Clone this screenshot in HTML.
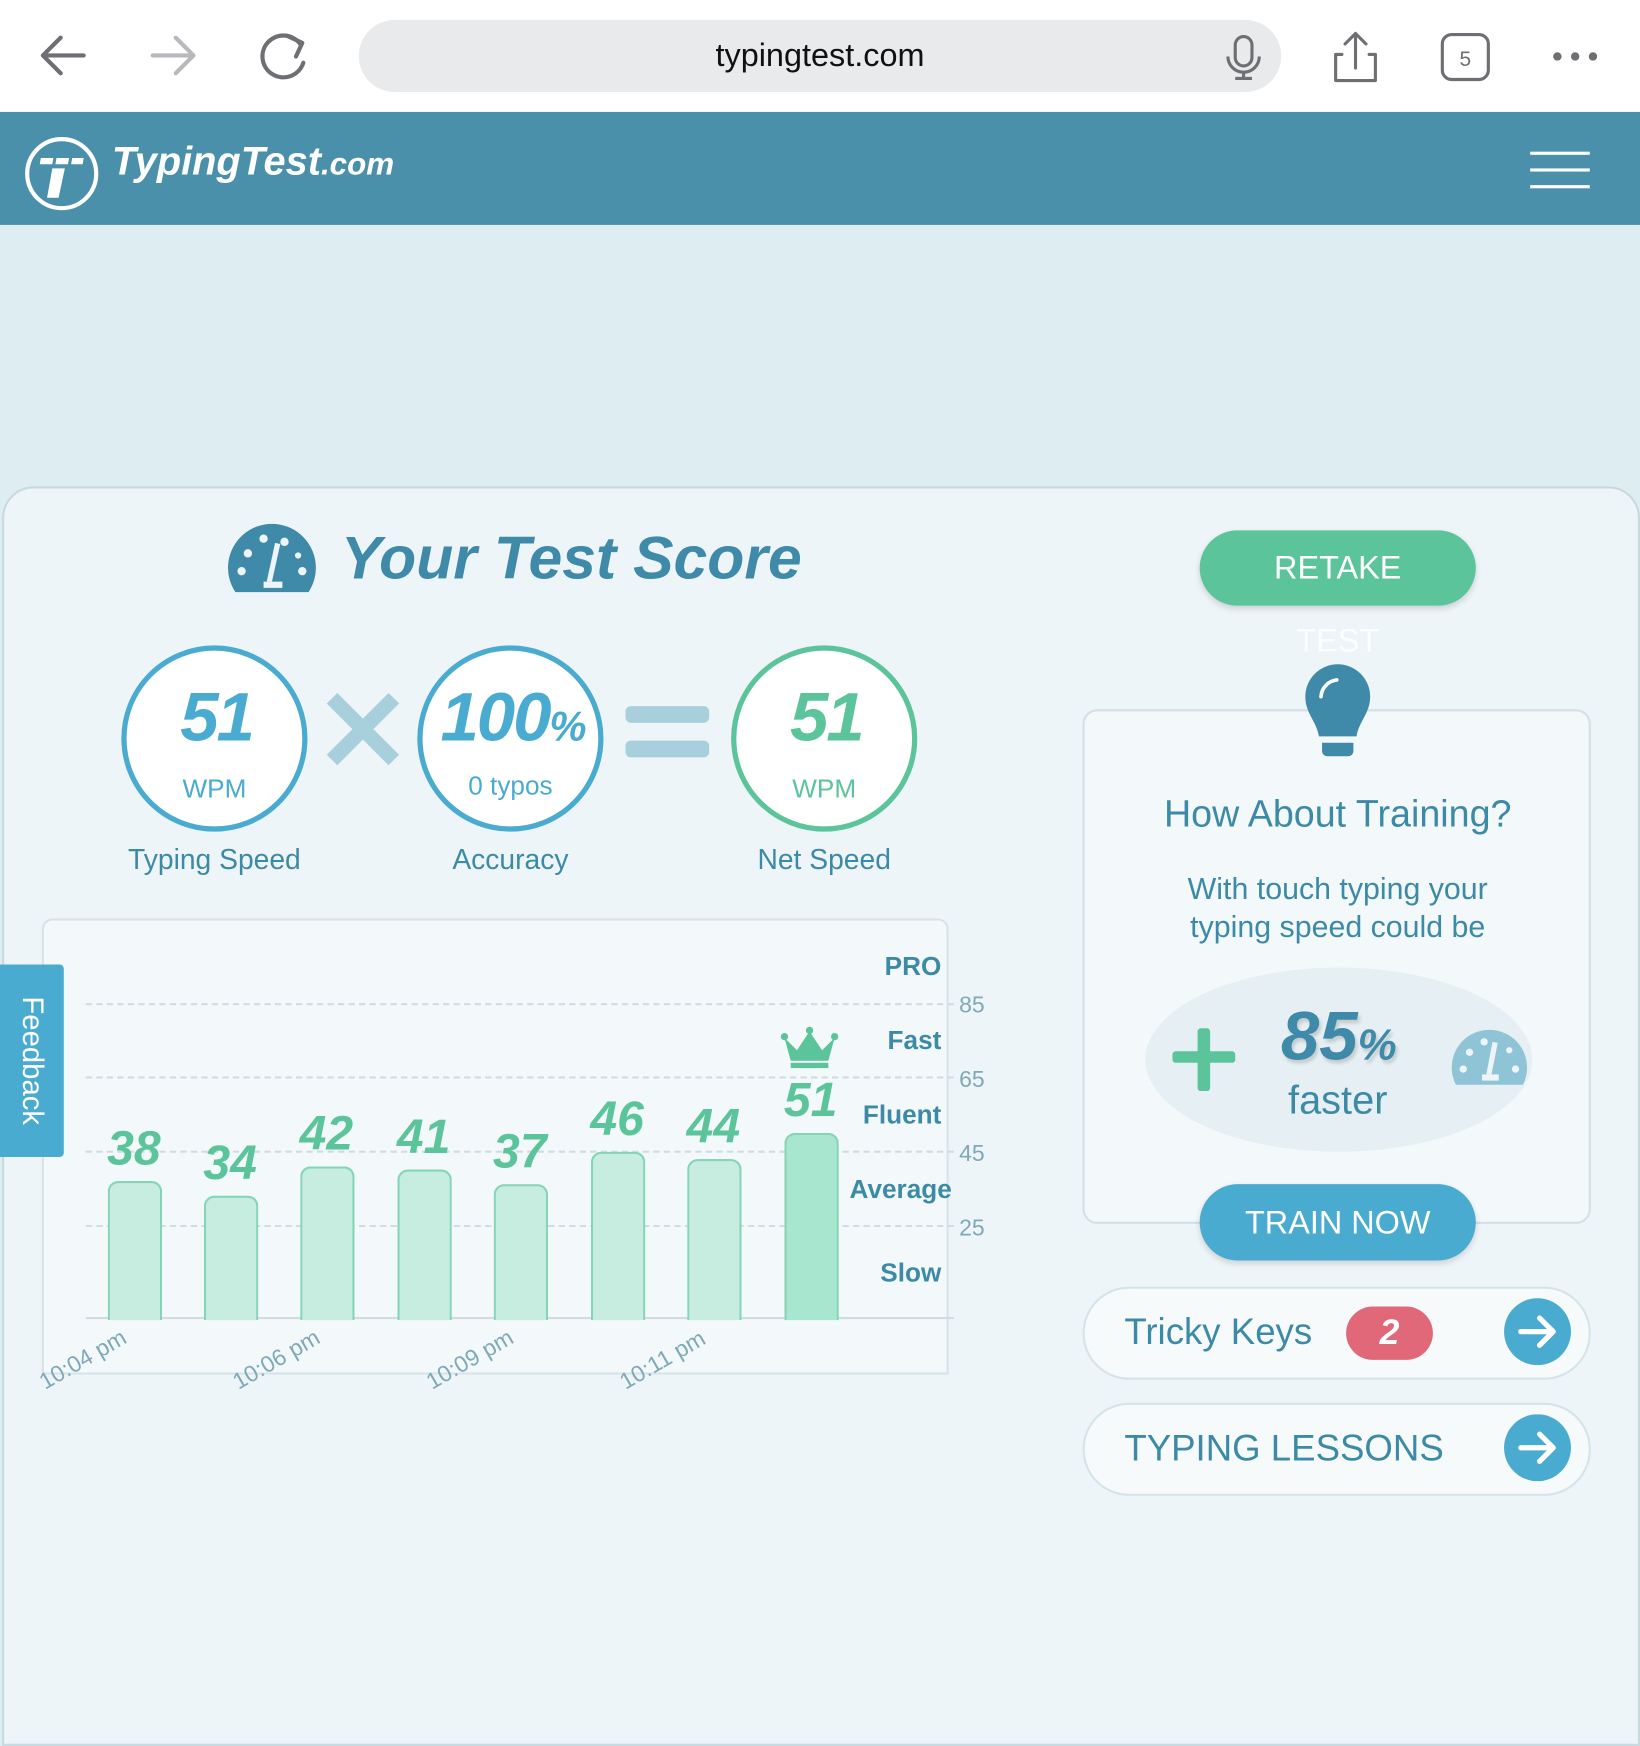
<!DOCTYPE html>
<html><head><meta charset="utf-8"><style>
html,body{margin:0;padding:0;width:1640px;height:1544px;overflow:hidden;background:#deedf2;font-family:"Liberation Sans",sans-serif}
#w{position:absolute;left:0;top:0;width:1568px;height:1476px;transform:scale(1.04592,1.04607);transform-origin:0 0}
.a{position:absolute}
.c{position:absolute;transform:translate(-50%,-50%);white-space:nowrap}
.circ{position:absolute;width:178px;height:178px;border-radius:50%;background:#fff;box-sizing:border-box}
.big{font-weight:bold;font-style:italic;font-size:66px;letter-spacing:-2px}
.lab{color:#3c8aa6;font-size:27px}
.btn{position:absolute;border-radius:37px;color:#fff;font-size:31px;text-align:center;box-shadow:0 3px 6px rgba(0,0,0,.15)}
.num{position:absolute;transform:translateX(-50%);color:#5bc49a;font-weight:bold;font-style:italic;font-size:46px}
.bar{position:absolute;width:48px;background:#c6ede0;border:2px solid #84d4b6;border-bottom:none;border-radius:10px 10px 0 0}
.rl{position:absolute;right:668px;color:#3c8aa6;font-weight:bold;font-size:25px}
.yl{position:absolute;left:917px;color:#7fa9b8;font-size:22px}
.dl{position:absolute;left:82px;width:830px;border-top:2px dashed #cfdde3}
.tl{position:absolute;color:#7fa9b8;font-size:22px;transform:rotate(-30deg);transform-origin:left bottom}
.pill{position:absolute;left:1035px;width:486px;border:2px solid #d6e3e8;border-radius:46px;background:#f7fafb;box-sizing:border-box}
</style></head><body><div id="w">
<div class="a" style="left:0;top:0;width:1568px;height:107px;background:#fff"></div>
<svg class="a" style="left:30px;top:28px" width="1520" height="60" viewBox="30 28 1520 60">
<g fill="none" stroke="#6e6e73" stroke-width="4" stroke-linecap="round" stroke-linejoin="round">
<path d="M80 53H42M58 36L41 53L58 70"/>
<path d="M146 53H184M168 36L185 53L168 70" stroke="#b8b8bd"/>
<path d="M287 42A20 20 0 1 0 290 60"/><path d="M276 35L289 41L283 54"/>
<path d="M1283 52h-6v25h38v-25h-6M1296 33v32M1286 42l10-10l10 10" stroke-width="3"/>
<rect x="1379" y="33" width="44" height="43" rx="9" stroke-width="3"/>
</g>
<text x="1401" y="63" font-size="20" fill="#6e6e73" text-anchor="middle" font-family="Liberation Sans">5</text>
<circle cx="1489" cy="54" r="4" fill="#6e6e73"/><circle cx="1506" cy="54" r="4" fill="#6e6e73"/><circle cx="1523" cy="54" r="4" fill="#6e6e73"/>
</svg>
<div class="a" style="left:343px;top:19px;width:882px;height:69px;border-radius:35px;background:#e9eaec"></div>
<div class="c" style="left:784px;top:53px;font-size:31px;color:#111">typingtest.com</div>
<svg class="a" style="left:1170px;top:32px" width="40" height="46"><g fill="none" stroke="#6e6e73" stroke-width="3"><rect x="11" y="3" width="16" height="28" rx="8"/><path d="M4 22a15 15 0 0 0 30 0M19 37v6M11 43h16"/></g></svg>
<div class="a" style="left:0;top:107px;width:1568px;height:108px;background:#4a90aa"></div>
<svg class="a" style="left:22px;top:129px" width="74" height="74"><circle cx="37" cy="37" r="33" fill="none" stroke="#fff" stroke-width="4"/><path d="M17 22h12l-1 6h-12zM32 22h12l-1 6h-12zM47 22h11l-1 6h-11zM28 32h12l-6 28h-11z" fill="#fff"/></svg>
<div class="a" style="left:107px;top:134px;color:#fff;font-weight:bold;font-style:italic;font-size:38px">TypingTest<span style="font-size:30px">.com</span></div>
<div class="a" style="left:1463px;top:145px;width:57px;height:3px;background:#fff"></div>
<div class="a" style="left:1463px;top:161px;width:57px;height:3px;background:#fff"></div>
<div class="a" style="left:1463px;top:177px;width:57px;height:3px;background:#fff"></div>
<div class="a" style="left:2px;top:465px;width:1562px;height:1200px;background:#eef5f8;border:2px solid #c9d9e0;border-radius:30px 30px 0 0"></div>
<svg class="a" style="left:217px;top:499px" width="86" height="68" viewBox="0 0 86 68"><path d="M8 67A42 42 0 1 1 78 67Z" fill="#3f8aa8"/><g fill="#eef5f8"><circle cx="14" cy="47" r="4"/><circle cx="20" cy="30" r="4"/><circle cx="35" cy="16" r="4"/><circle cx="55" cy="19" r="4"/><circle cx="72" cy="47" r="4"/><circle cx="68" cy="32" r="3"/><path d="M46 20l5 1l-8 36h-5z"/><path d="M35 57h18v6h-18z"/></g></svg>
<div class="a" style="left:326px;top:500px;color:#3f8aa8;font-weight:bold;font-style:italic;font-size:58px">Your Test Score</div>
<div class="circ" style="left:116px;top:617px;border:5px solid #4aabd0"></div>
<div class="c big" style="left:207px;top:685px;color:#4aabd0">51</div>
<div class="c" style="left:205px;top:755px;color:#4aabd0;font-size:25px">WPM</div>
<div class="c lab" style="left:205px;top:822px">Typing Speed</div>
<div class="c" style="left:347px;top:700px;color:#a8cfdc;font-size:110px;font-weight:bold;line-height:1">✕</div>
<div class="circ" style="left:399px;top:617px;border:5px solid #4aabd0"></div>
<div class="c big" style="left:490px;top:685px;color:#4aabd0">100<span style="font-size:40px">%</span></div>
<div class="c" style="left:488px;top:752px;color:#4aabd0;font-size:25px">0 typos</div>
<div class="c lab" style="left:488px;top:822px">Accuracy</div>
<div class="a" style="left:598px;top:675px;width:80px;height:16px;border-radius:5px;background:#a8cfdc"></div>
<div class="a" style="left:598px;top:708px;width:80px;height:16px;border-radius:5px;background:#a8cfdc"></div>
<div class="circ" style="left:699px;top:617px;border:5px solid #5bc49a"></div>
<div class="c big" style="left:790px;top:685px;color:#5bc49a">51</div>
<div class="c" style="left:788px;top:755px;color:#5bc49a;font-size:25px">WPM</div>
<div class="c lab" style="left:788px;top:822px">Net Speed</div>
<div class="a" style="left:40px;top:878px;width:863px;height:432px;background:#f3f8fa;border:2px solid #d6e3e8;border-radius:10px 10px 0 0"></div>
<div class="dl" style="top:959px"></div><div class="dl" style="top:1029px"></div><div class="dl" style="top:1100px"></div><div class="dl" style="top:1171px"></div>
<div class="a" style="left:82px;top:1259px;width:830px;border-top:2px solid #cfdde3"></div>
<div class="yl" style="top:948px">85</div><div class="yl" style="top:1019px">65</div><div class="yl" style="top:1090px">45</div><div class="yl" style="top:1161px">25</div>
<div class="rl" style="top:910px">PRO</div><div class="rl" style="top:981px">Fast</div><div class="rl" style="top:1052px">Fluent</div><div class="rl" style="top:1123px;right:658px">Average</div><div class="rl" style="top:1203px">Slow</div>
<div class="bar" style="left:103px;top:1129px;height:131px"></div>
<div class="bar" style="left:195px;top:1143px;height:117px"></div>
<div class="bar" style="left:287px;top:1115px;height:145px"></div>
<div class="bar" style="left:380px;top:1118px;height:142px"></div>
<div class="bar" style="left:472px;top:1132px;height:128px"></div>
<div class="bar" style="left:565px;top:1101px;height:159px"></div>
<div class="bar" style="left:657px;top:1108px;height:152px"></div>
<div class="bar" style="left:750px;top:1083px;height:177px;background:#a9e6d0"></div>
<div class="num" style="left:128px;top:1070px">38</div>
<div class="num" style="left:220px;top:1084px">34</div>
<div class="num" style="left:312px;top:1056px">42</div>
<div class="num" style="left:405px;top:1059px">41</div>
<div class="num" style="left:497px;top:1073px">37</div>
<div class="num" style="left:590px;top:1042px">46</div>
<div class="num" style="left:682px;top:1049px">44</div>
<div class="num" style="left:775px;top:1024px">51</div>
<svg class="a" style="left:746px;top:980px" width="56" height="42"><path d="M4 12l12 12l12-18l12 18l12-12l-6 22h-36z" fill="#5bc49a"/><circle cx="4" cy="11" r="3.5" fill="#5bc49a"/><circle cx="28" cy="5" r="3.5" fill="#5bc49a"/><circle cx="52" cy="11" r="3.5" fill="#5bc49a"/><rect x="10" y="36" width="36" height="5" fill="#5bc49a"/></svg>
<div class="tl" style="left:46px;top:1308px">10:04 pm</div>
<div class="tl" style="left:231px;top:1308px">10:06 pm</div>
<div class="tl" style="left:416px;top:1308px">10:09 pm</div>
<div class="tl" style="left:601px;top:1308px">10:11 pm</div>
<div class="a" style="left:0;top:922px;width:61px;height:184px;background:#4aabd0;border-radius:0 4px 4px 0"></div>
<div class="c" style="left:31px;top:1014px;transform:translate(-50%,-50%) rotate(90deg);color:#fff;font-size:28px">Feedback</div>
<div class="btn" style="left:1147px;top:507px;width:264px;height:72px;line-height:72px;background:#5bc49a">RETAKE</div>
<div class="c" style="left:1279px;top:613px;color:#fff;font-size:31px;opacity:.85">TEST</div>
<div class="a" style="left:1035px;top:678px;width:486px;height:492px;background:#f3f8fa;border:2px solid #d3e0e6;border-radius:14px;box-sizing:border-box"></div>
<svg class="a" style="left:1246px;top:633px" width="66" height="92" viewBox="0 0 66 92"><path d="M33 2a31 31 0 0 1 31 31c0 16-11 24-13 38h-36c-2-14-13-22-13-38a31 31 0 0 1 31-31z" fill="#3f8aa8"/><path d="M18 77h30v8a5 5 0 0 1-5 5h-20a5 5 0 0 1-5-5z" fill="#3f8aa8"/><path d="M17 33a17 17 0 0 1 15-16" fill="none" stroke="#fff" stroke-width="3.5" stroke-linecap="round"/></svg>
<div class="c" style="left:1279px;top:778px;color:#3c8aa6;font-size:36px">How About Training?</div>
<div class="c" style="left:1279px;top:851px;color:#3c8aa6;font-size:29px">With touch typing your</div>
<div class="c" style="left:1279px;top:887px;color:#3c8aa6;font-size:29px">typing speed could be</div>
<div class="a" style="left:1095px;top:925px;width:370px;height:176px;border-radius:50%;background:#e6eff3"></div>
<div class="a" style="left:1121px;top:1005px;width:60px;height:11px;background:#5bc49a;border-radius:3px"></div>
<div class="a" style="left:1145px;top:983px;width:12px;height:60px;background:#5bc49a;border-radius:3px"></div>
<div class="c" style="left:1280px;top:990px;color:#3f8aa8;font-weight:bold;font-style:italic;font-size:66px;text-shadow:2px 3px 3px rgba(0,0,0,.15)">85<span style="font-size:42px">%</span></div>
<div class="c" style="left:1279px;top:1053px;color:#3c8aa6;font-size:38px">faster</div>
<svg class="a" style="left:1387px;top:984px" width="74" height="54" viewBox="0 0 74 54"><path d="M5 53A36 36 0 1 1 69 53Z" fill="#8fc3d6"/><g fill="#eef5f8"><circle cx="12" cy="38" r="3.5"/><circle cx="18" cy="22" r="3.5"/><circle cx="32" cy="12" r="3.5"/><circle cx="56" cy="20" r="3"/><circle cx="62" cy="38" r="3.5"/><path d="M40 12l5 1l-6 30h-5z"/><path d="M30 43h16v6h-16z"/></g></svg>
<div class="btn" style="left:1147px;top:1132px;width:264px;height:73px;line-height:73px;background:#4aabd0">TRAIN NOW</div>
<div class="pill" style="top:1230px;height:89px"></div>
<div class="a" style="left:1075px;top:1254px;color:#3c8aa6;font-size:35px">Tricky Keys</div>
<div class="a" style="left:1287px;top:1249px;width:83px;height:51px;border-radius:26px;background:#e06878;color:#fff;font-weight:bold;font-style:italic;font-size:34px;text-align:center;line-height:51px">2</div>
<svg class="a" style="left:1438px;top:1241px" width="64" height="64"><circle cx="32" cy="32" r="32" fill="#4aabd0"/><path d="M16 32h30M34 19l13 13l-13 13" fill="none" stroke="#fff" stroke-width="5" stroke-linecap="round" stroke-linejoin="round"/></svg>
<div class="pill" style="top:1341px;height:89px"></div>
<div class="a" style="left:1075px;top:1365px;color:#3c8aa6;font-size:35px">TYPING LESSONS</div>
<svg class="a" style="left:1438px;top:1352px" width="64" height="64"><circle cx="32" cy="32" r="32" fill="#4aabd0"/><path d="M16 32h30M34 19l13 13l-13 13" fill="none" stroke="#fff" stroke-width="5" stroke-linecap="round" stroke-linejoin="round"/></svg>
</div></body></html>
